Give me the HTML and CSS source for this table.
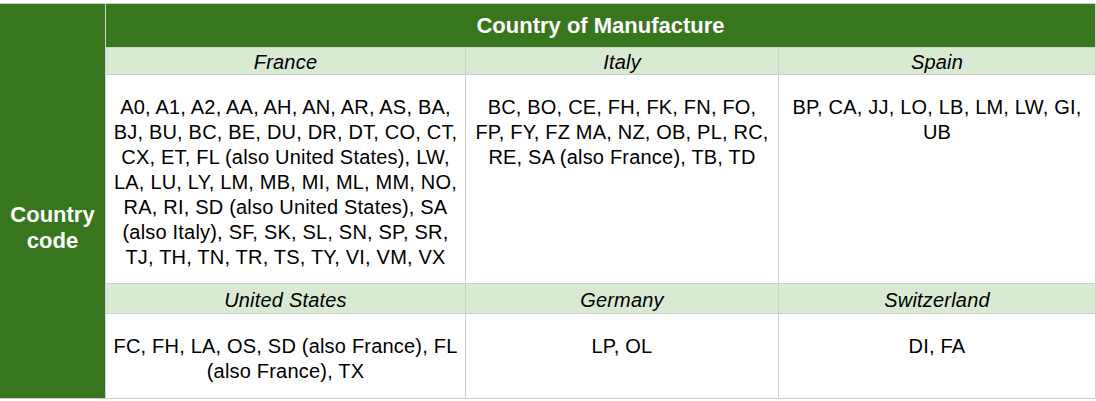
FILE: index.html
```html
<!DOCTYPE html>
<html lang="en">
<head>
<meta charset="utf-8">
<title>Country codes</title>
<link rel="stylesheet" href="styles.css">
</head>
<body>
<div class="sheet">
  <div class="side">Country<br>code</div>
  <div class="title">Country of Manufacture</div>
  <div class="sub sub-a">France</div>
  <div class="sub sub-a">Italy</div>
  <div class="sub sub-a">Spain</div>
  <div class="cell">A0, A1, A2, AA, AH, AN, AR, AS, BA,<br>BJ, BU, BC, BE, DU, DR, DT, CO, CT,<br>CX, ET, FL (also United States), LW,<br>LA, LU, LY, LM, MB, MI, ML, MM, NO,<br>RA, RI, SD (also United States), SA<br>(also Italy), SF, SK, SL, SN, SP, SR,<br>TJ, TH, TN, TR, TS, TY, VI, VM, VX</div>
  <div class="cell">BC, BO, CE, FH, FK, FN, FO,<br>FP, FY, FZ MA, NZ, OB, PL, RC,<br>RE, SA (also France), TB, TD</div>
  <div class="cell">BP, CA, JJ, LO, LB, LM, LW, GI,<br>UB</div>
  <div class="sub sub-b">United States</div>
  <div class="sub sub-b">Germany</div>
  <div class="sub sub-b">Switzerland</div>
  <div class="cell">FC, FH, LA, OS, SD (also France), FL<br>(also France), TX</div>
  <div class="cell">LP, OL</div>
  <div class="cell">DI, FA</div>
</div>
</body>
</html>
```
FILE: styles.css
```css
html, body {
  margin: 0;
  padding: 0;
  background: #ffffff;
  overflow: hidden;
}
body {
  font-family: "Liberation Sans", Arial, sans-serif;
  color: #000000;
}
.sheet {
  display: grid;
  grid-template-columns: 105px 359px 312px 316px;
  grid-template-rows: 43px 26px 208px 29px 84px;
  gap: 1px;
  padding: 1px;
  background: #cfcfcf;
  width: max-content;
  margin: 3px 0 0 -1px;
}
.side {
  grid-row: 1 / -1;
  grid-column: 1;
  background: #38761d;
  color: #ffffff;
  font-weight: bold;
  font-size: 22px;
  line-height: 26px;
  text-align: center;
  display: flex;
  align-items: center;
  justify-content: center;
  padding-top: 53px;
}
.title {
  grid-column: 2 / -1;
  background: #38761d;
  color: #ffffff;
  font-weight: bold;
  font-size: 22px;
  display: flex;
  align-items: center;
  justify-content: center;
}
.sub {
  background: #d9ead3;
  font-style: italic;
  font-size: 20px;
  letter-spacing: 0.2px;
  display: flex;
  align-items: center;
  justify-content: center;
  padding-top: 3px;
  box-sizing: border-box;
}
.cell {
  background: #ffffff;
  font-size: 20px;
  line-height: 25px;
  letter-spacing: 0.2px;
  text-align: center;
  padding: 20px 4px 0;
}
```
